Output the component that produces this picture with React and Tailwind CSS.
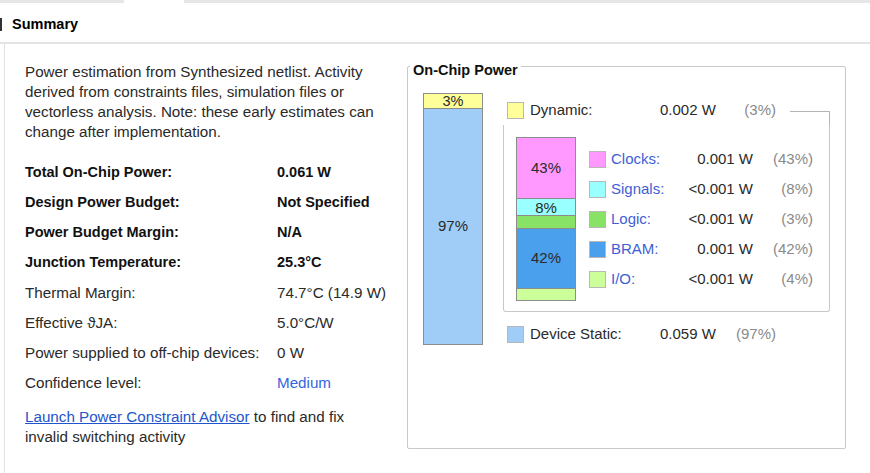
import React from "react";

const rows = [
  { l: "Total On-Chip Power:", v: "0.061 W", b: true },
  { l: "Design Power Budget:", v: "Not Specified", b: true },
  { l: "Power Budget Margin:", v: "N/A", b: true },
  { l: "Junction Temperature:", v: "25.3°C", b: true },
  { l: "Thermal Margin:", v: "74.7°C (14.9 W)" },
  { l: "Effective \u03D1JA:", v: "5.0°C/W" },
  { l: "Power supplied to off-chip devices:", v: "0 W" },
  { l: "Confidence level:", v: "Medium", link: true },
];

const legend = [
  { n: "Clocks:", v: "0.001 W", p: "(43%)", c: "bg-[#ff99ff]" },
  { n: "Signals:", v: "<0.001 W", p: "(8%)", c: "bg-[#99ffff]" },
  { n: "Logic:", v: "<0.001 W", p: "(3%)", c: "bg-[#88e266]" },
  { n: "BRAM:", v: "0.001 W", p: "(42%)", c: "bg-[#4aa0ec]" },
  { n: "I/O:", v: "<0.001 W", p: "(4%)", c: "bg-[#ccff99]" },
];

export default function App() {
  return (
    <div className="w-[870px] h-[473px] bg-white overflow-hidden font-['Liberation_Sans',Arial,sans-serif] text-[#2a2a2a]">
      <div className="flex h-[3px]">
        <div className="w-[124px] bg-[#e6e6e6]" />
        <div className="w-[60px] bg-white" />
        <div className="flex-1 bg-[#e6e6e6]" />
      </div>
      <div className="h-[41px] flex items-center border-b-2 border-[#e4e4e4]">
        <div className="w-[2px] h-[13px] bg-[#333] mt-[3px]" />
        <div className="ml-[10px] mt-[4px] text-[14.5px] font-bold text-black">Summary</div>
      </div>
      <div className="ml-[4px] border-l border-[#e2e2e2] pl-[20px] flex h-[430px]">
        <div className="w-[382px] pt-[18px] text-[15.2px]">
          <p className="leading-[20px] whitespace-nowrap">
            Power estimation from Synthesized netlist. Activity
            <br />
            derived from constraints files, simulation files or
            <br />
            vectorless analysis. Note: these early estimates can
            <br />
            change after implementation.
          </p>
          <div className="mt-[16px]">
            {rows.map((r) => (
              <div key={r.l} className={`h-[30px] flex items-center whitespace-nowrap ${r.b ? "font-bold text-[14.5px] text-[#111]" : ""}`}>
                <div className="w-[252px]">{r.l}</div>
                <div className={r.link ? "text-[#3366dd]" : ""}>{r.v}</div>
              </div>
            ))}
          </div>
          <p className="mt-[9px] leading-[20px] whitespace-nowrap">
            <span className="text-[#2255cc] underline">Launch Power Constraint Advisor</span> to find and fix
            <br />
            invalid switching activity
          </p>
        </div>
        <div className="pt-[22px]">
          <div className="relative w-[439px] h-[383px] border border-[#c9c9c9] rounded-[2px] text-[15px]">
            <div className="absolute left-[2px] top-[-6px] px-[3px] bg-white font-bold text-[14.5px] text-[#111] leading-[18px]">
              On-Chip Power
            </div>
            <div className="flex pl-[15px] pt-[26px]">
              <div className="w-[60px] h-[252px] border border-[#8c8c8c] flex flex-col">
                <div className="h-[15px] bg-[#ffff99] border-b border-[#8c8c8c] flex items-center justify-center text-[14.5px] leading-none">3%</div>
                <div className="flex-1 bg-[#9fcdf7] flex items-center justify-center">97%</div>
              </div>
              <div className="ml-[20px] w-[327px] flex flex-col">
                <div className="h-[32px] flex items-start">
                  <div className="ml-[4px] mt-[9px] w-[17px] h-[17px] bg-[#ffff99] border border-[#b8b8b8]" />
                  <div className="ml-[6px] mt-[8px] w-[130px] leading-[18px]">Dynamic:</div>
                  <div className="mt-[8px] w-[70px] leading-[18px]">0.002 W</div>
                  <div className="mt-[8px] w-[46px] text-right leading-[18px] text-[#8a8a8a]">(3%)</div>
                  <div className="ml-[14px] mt-[18px] w-[40px] self-stretch border-t border-r border-[#b4b4b4]" />
                </div>
                <div className="h-[187px] border-l border-r border-b border-[#c8c8c8] rounded-b-[3px] flex items-start">
                  <div className="ml-[12px] mt-[12px] w-[60px] h-[164px] border border-[#8c8c8c] flex flex-col">
                    <div className="h-[60px] bg-[#ff99ff] flex items-center justify-center">43%</div>
                    <div className="h-[17px] border-t border-[#8c8c8c] bg-[#99ffff] flex items-center justify-center leading-none">8%</div>
                    <div className="h-[13px] border-t border-[#8c8c8c] bg-[#88e266]" />
                    <div className="h-[60px] border-t border-[#8c8c8c] bg-[#4aa0ec] flex items-center justify-center">42%</div>
                    <div className="flex-1 border-t border-[#8c8c8c] bg-[#ccff99]" />
                  </div>
                  <div className="ml-[13px] mt-[19px] flex flex-col">
                    {legend.map((g) => (
                      <div key={g.n} className="h-[30px] flex items-center whitespace-nowrap">
                        <div className={`w-[17px] h-[17px] border border-[#b8b8b8] ${g.c}`} />
                        <div className="ml-[5px] w-[69px] text-[#3d5fd6]">{g.n}</div>
                        <div className="w-[73px] text-right">{g.v}</div>
                        <div className="w-[60px] text-right text-[#8a8a8a]">{g.p}</div>
                      </div>
                    ))}
                  </div>
                </div>
                <div className="mt-[14px] flex items-center h-[17px] whitespace-nowrap">
                  <div className="ml-[4px] w-[17px] h-[17px] bg-[#9fcdf7] border border-[#b8b8b8]" />
                  <div className="ml-[6px] w-[130px]">Device Static:</div>
                  <div className="w-[70px]">0.059 W</div>
                  <div className="w-[46px] text-right text-[#8a8a8a]">(97%)</div>
                </div>
              </div>
            </div>
          </div>
        </div>
      </div>
    </div>
  );
}
